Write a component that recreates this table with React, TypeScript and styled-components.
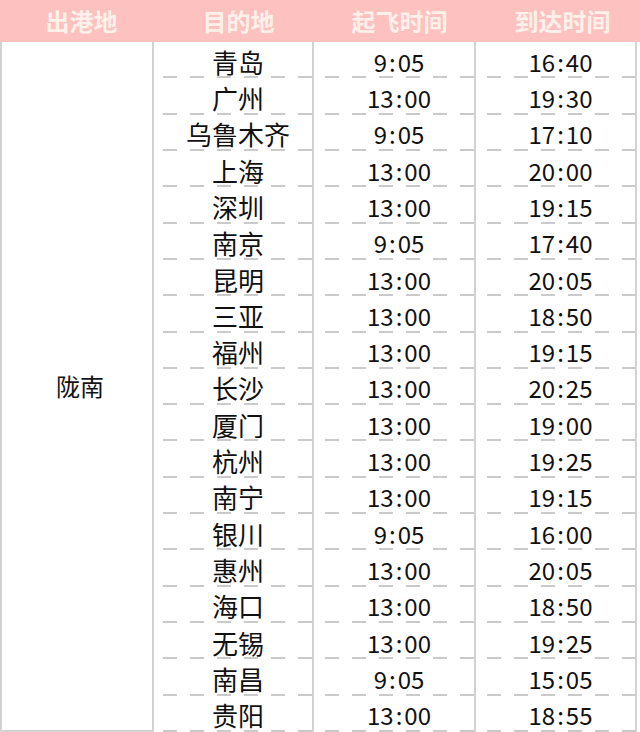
import React from "react";
import styled, { createGlobalStyle } from "styled-components";

const Global = createGlobalStyle`
  html, body { margin: 0; padding: 0; background: #ffffff; }
  body { font-family: "Noto Sans CJK SC", "Noto Sans", sans-serif; }
`;

const Page = styled.div`
  width: 640px;
  height: 732px;
  overflow: hidden;
  background: #ffffff;
  display: flex;
  flex-direction: column;
`;

const Header = styled.div`
  height: 42px;
  flex: none;
  background: #fdc1c0;
  display: grid;
  grid-template-columns: 154px 160px 162px 164px;
`;

const HeadCell = styled.div`
  display: flex;
  align-items: center;
  justify-content: center;
  padding-left: 9px;
  font-size: 24px;
  font-weight: 700;
  color: #fff0ea;
  line-height: 1;
  padding-bottom: 1px;
`;

const Body = styled.div`
  flex: 1;
  width: 637px;
  display: grid;
  grid-template-columns: 154px 160px 162px 161px;
  grid-template-rows: repeat(19, 1fr);
`;

const OriginCell = styled.div`
  grid-column: 1;
  grid-row: 1 / span 19;
  border-left: 2px solid #d2d2d2;
  border-right: 2px solid #d2d2d2;
  border-bottom: 2px solid #d2d2d2;
  display: flex;
  align-items: center;
  justify-content: center;
  padding-left: 6px;
  font-size: 24px;
  color: #141414;
  line-height: 1;
`;

const Cell = styled.div<{ $offset: number; $col: number; $big?: boolean }>`
  grid-column: ${(p) => p.$col};
  border-right: 2px solid #d2d2d2;
  display: flex;
  align-items: center;
  justify-content: center;
  padding-left: 10px;
  padding-top: 3px;
  font-size: ${(p) => (p.$big ? "26px" : "24px")};
  color: #111111;
  line-height: 1;
  background-image: linear-gradient(to right, #cacaca 14px, transparent 14px);
  background-size: 27px 2px;
  background-repeat: repeat-x;
  background-position: ${(p) => p.$offset}px 100%;
  min-height: 0;
`;

const Colon = styled.span`
  margin: 0 2px;
`;

const rows: [string, string, string][] = [
  ["青岛", "9:05", "16:40"],
  ["广州", "13:00", "19:30"],
  ["乌鲁木齐", "9:05", "17:10"],
  ["上海", "13:00", "20:00"],
  ["深圳", "13:00", "19:15"],
  ["南京", "9:05", "17:40"],
  ["昆明", "13:00", "20:05"],
  ["三亚", "13:00", "18:50"],
  ["福州", "13:00", "19:15"],
  ["长沙", "13:00", "20:25"],
  ["厦门", "13:00", "19:00"],
  ["杭州", "13:00", "19:25"],
  ["南宁", "13:00", "19:15"],
  ["银川", "9:05", "16:00"],
  ["惠州", "13:00", "20:05"],
  ["海口", "13:00", "18:50"],
  ["无锡", "13:00", "19:25"],
  ["南昌", "9:05", "15:05"],
  ["贵阳", "13:00", "18:55"],
];

// global dash pattern: dashes start at x = 1 + 27k
const off = (left: number) => (((1 - left) % 27) + 27) % 27;

const Time = ({ value }: { value: string }) => {
  const [h, m] = value.split(":");
  return (
    <span>
      {h}
      <Colon>:</Colon>
      {m}
    </span>
  );
};

export default function App() {
  return (
    <>
      <Global />
      <Page>
        <Header>
          <HeadCell>出港地</HeadCell>
          <HeadCell>目的地</HeadCell>
          <HeadCell>起飞时间</HeadCell>
          <HeadCell>到达时间</HeadCell>
        </Header>
        <Body>
          <OriginCell>陇南</OriginCell>
          {rows.map(([dest, dep, arr], i) => (
            <React.Fragment key={i}>
              <Cell $col={2} $offset={off(154)} $big style={{ gridRow: i + 1 }}>
                {dest}
              </Cell>
              <Cell $col={3} $offset={off(314)} style={{ gridRow: i + 1 }}>
                <Time value={dep} />
              </Cell>
              <Cell $col={4} $offset={off(476)} style={{ gridRow: i + 1 }}>
                <Time value={arr} />
              </Cell>
            </React.Fragment>
          ))}
        </Body>
      </Page>
    </>
  );
}
